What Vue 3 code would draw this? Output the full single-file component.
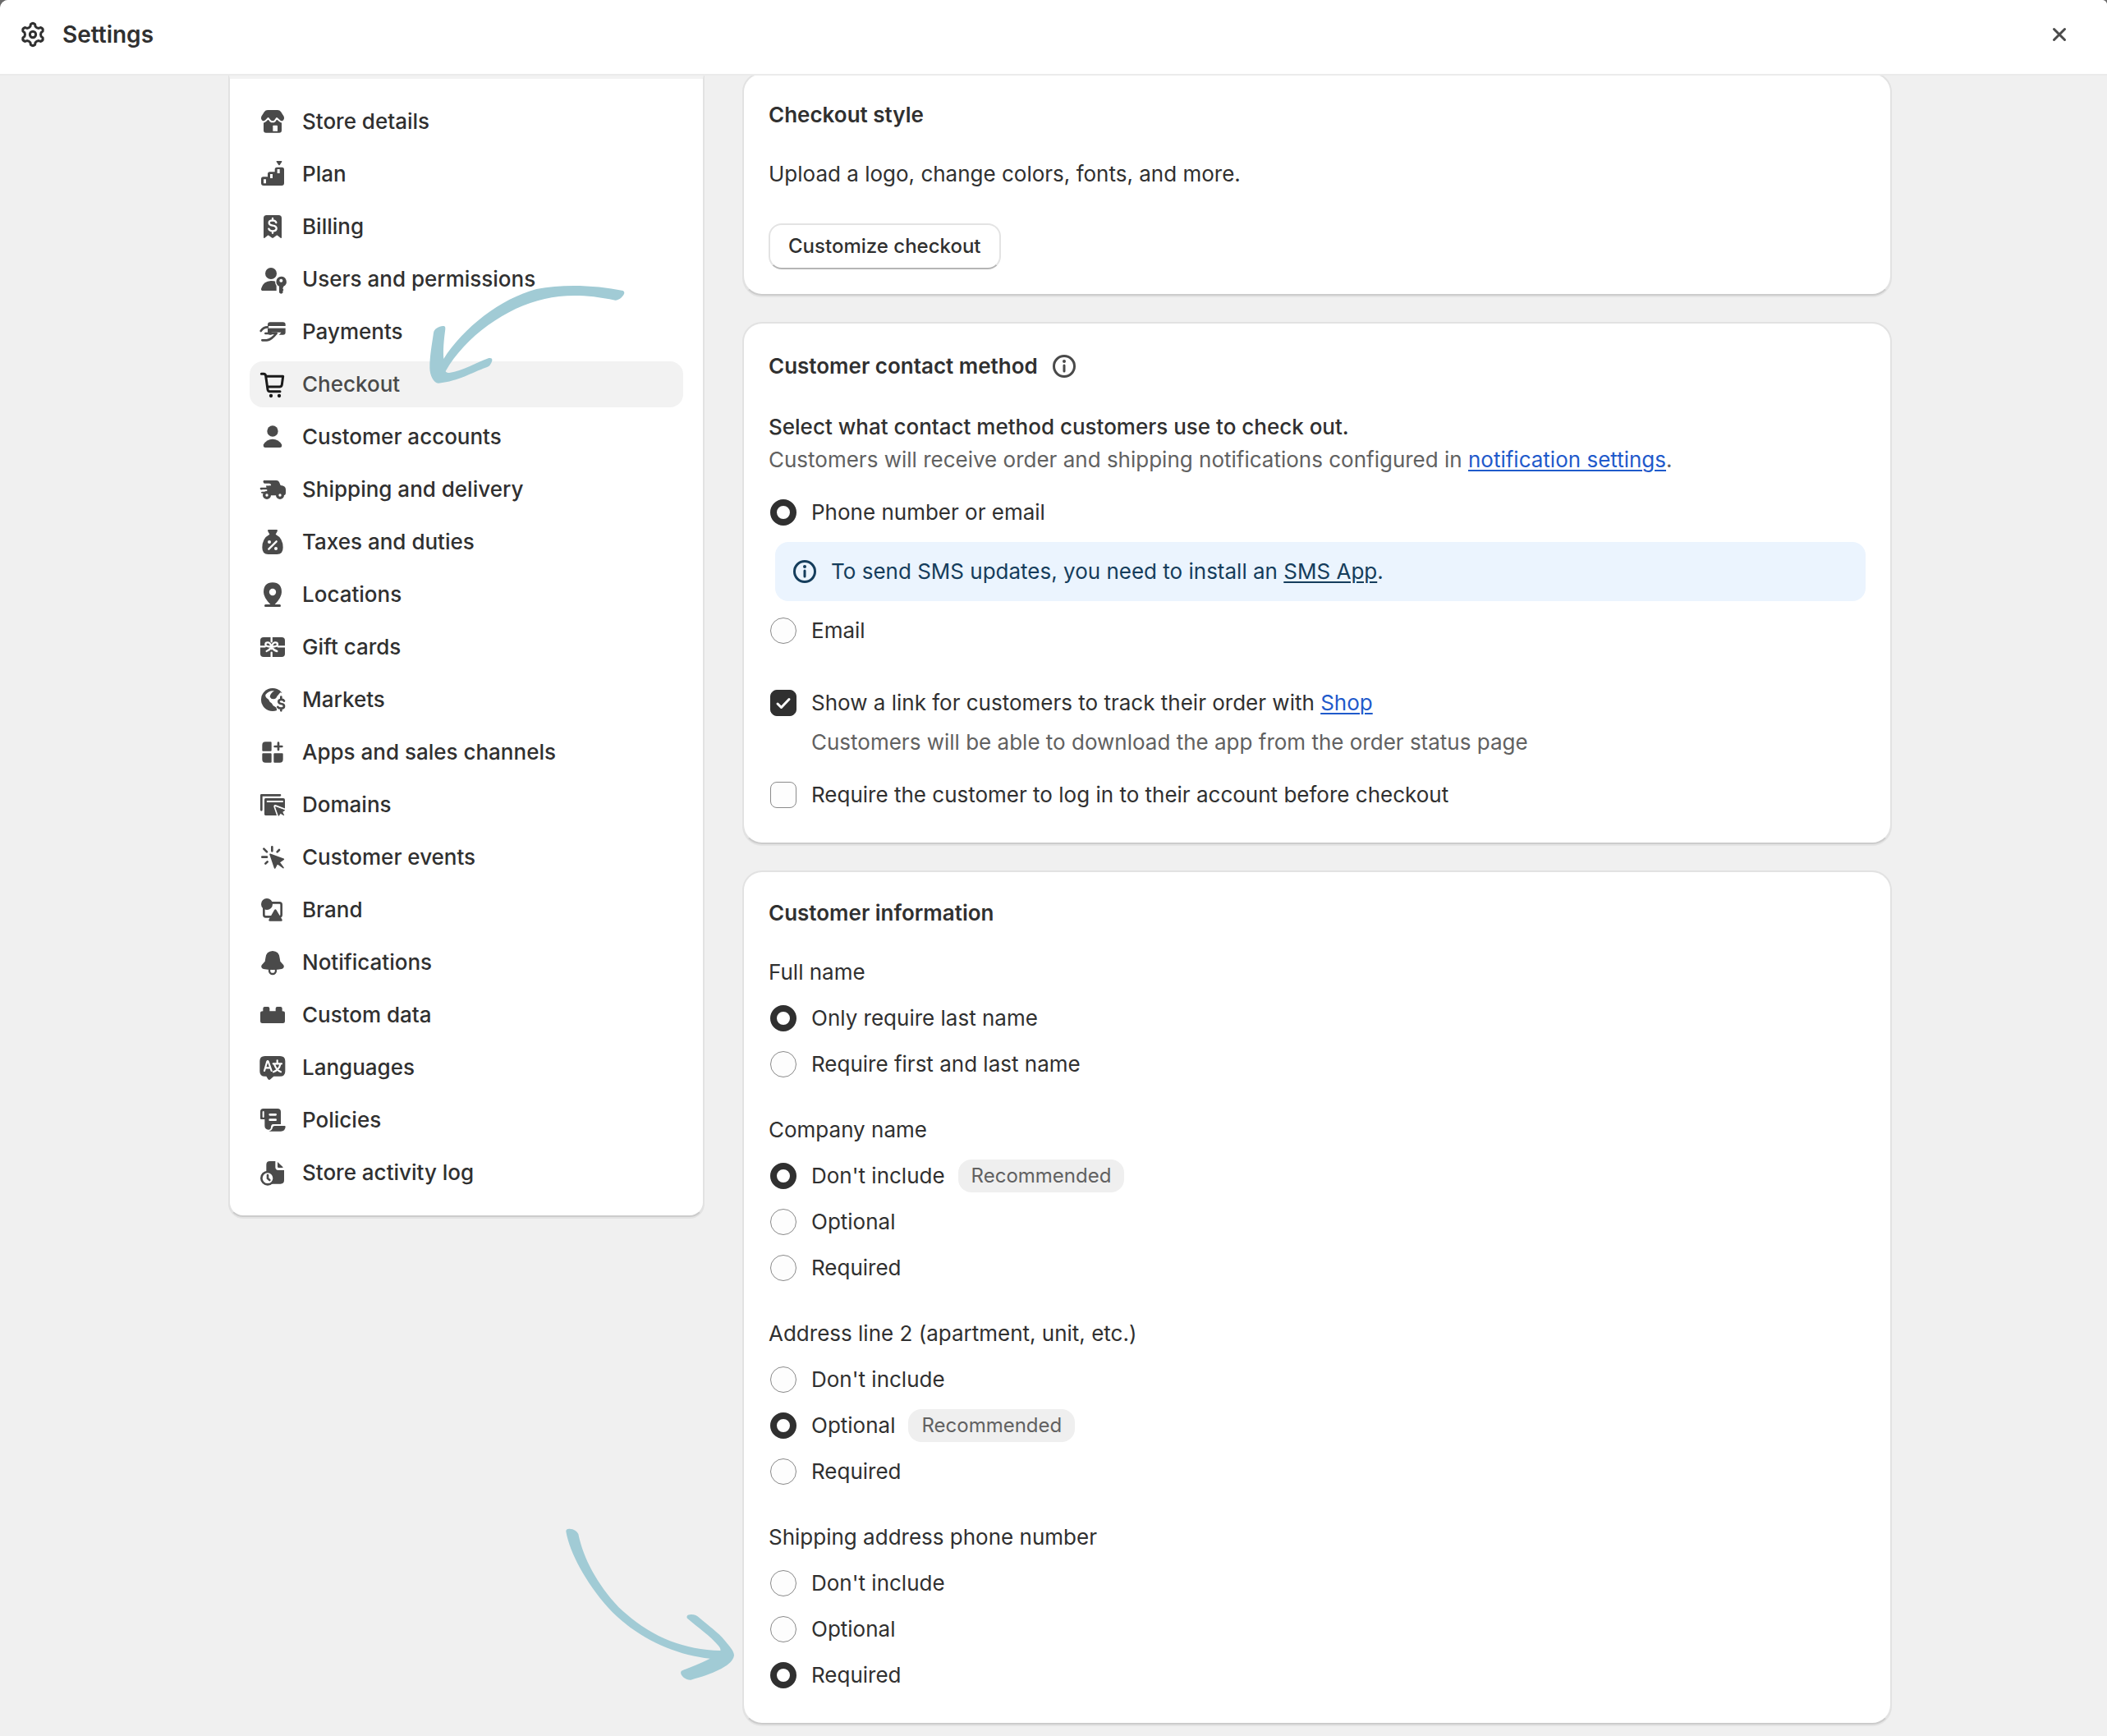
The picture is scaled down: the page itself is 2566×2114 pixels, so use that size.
<script setup>
import { ref, reactive } from 'vue'

const current = ref('Checkout')

const nav = [
  { label: 'Store details', icon: '<path d="M42 18H78Q86 18 90 24L101 41Q104 48 100 54Q97 58 93 59V92Q93 101 84 101H36Q27 101 27 92V59Q23 58 20 54Q16 48 19 41L30 24Q34 18 42 18Z"/><path d="M17 61Q27 64 34 58L44 48L52 58Q60 64 68 58L75 48L86 58Q93 64 103 61" fill="none" stroke="#fff" stroke-width="6" stroke-linejoin="round"/><path d="M61 76Q61 74 63 74H76Q78 74 78 76V95H61Z" fill="#fff"/>' },
  { label: 'Plan', icon: '<path d="M18 78Q18 70 26 70H42V60Q42 52 50 52H68V43Q68 35 76 35H94Q102 35 102 43V93Q102 102 93 102H27Q18 102 18 93ZM75 12H92Q95 12 94 15L86 27Q84 29 82 27L74 15Q73 12 75 12Z"/><path d="M27 79H36V94H27ZM51 60H60V75H51ZM77 42H86V57H77Z" fill="#fff"/>' },
  { label: 'Billing', icon: '<path d="M27 29Q27 18 38 18H82Q93 18 93 29V100Q92 104 89 101L78 92Q76 91 74 92L62 101Q60 102 58 101L46 92Q44 91 42 92L31 101Q28 104 27 100Z"/><path d="M73 45Q71 37 60 37Q47 37 47 46Q47 54 60 56Q74 58 74 67Q74 76 60 76Q49 76 46 68M60 30V38M60 76V83" fill="none" stroke="#fff" stroke-width="7" stroke-linecap="round"/>' },
  { label: 'Users and permissions', icon: '<circle cx="54" cy="39" r="21"/><path d="M54 66Q66 66 74 70V102H26Q15 102 19 92Q27 67 54 66Z"/><path d="M91 50A19 19 0 0 1 100 86L97 94L100 99L97 104L98 109Q91 117 84 109V86A19 19 0 0 1 91 50Z" stroke="#fff" stroke-width="8" /><path d="M91 50A19 19 0 0 1 100 86L97 94L100 99L97 104L98 109Q91 117 84 109V86A19 19 0 0 1 91 50Z"/><circle cx="91" cy="65" r="6" fill="#fff"/>' },
  { label: 'Payments', icon: '<path d="M42 34Q42 25 51 25H98Q107 25 107 34V62Q107 71 98 71H51Q42 71 42 62Z"/><path d="M42 43H108" stroke="#fff" stroke-width="8"/><path d="M56 69H76Q68 78 60 84" fill="none" stroke="#fff" stroke-width="14"/><path d="M17 57Q26 43 42 43M34 66H54Q58 66 64 66H74Q66 76 58 82Q46 91 38 91H22" fill="none" stroke="currentColor" stroke-width="8" stroke-linecap="round" stroke-linejoin="round"/>' },
  { label: 'Checkout', icon: '<path d="M19 22H27Q34 22 35 29L42 79Q43 86 50 86H87M36 31H98L94 61Q93 69 85 69H41" fill="none" stroke="currentColor" stroke-width="9" stroke-linecap="round" stroke-linejoin="round"/><circle cx="54" cy="102" r="6.5"/><circle cx="84" cy="102" r="6.5"/>' },
  { label: 'Customer accounts', icon: '<circle cx="60" cy="39" r="20"/><path d="M60 68Q82 68 93 88Q96 99 86 99H34Q24 99 27 88Q38 68 60 68Z"/>' },
  { label: 'Shipping and delivery', icon: '<path d="M30 27H74Q81 27 84 33L89 45Q108 47 108 60V73Q108 82 99 82H40Q30 82 30 74H22Q18 74 18 71Q18 68 22 68H42Q46 68 46 64Q46 61 42 61H18Q15 61 15 57Q15 54 18 54H44Q52 54 54 47Q56 40 48 38H30Q26 36 26 32Q26 27 30 27Z"/><path d="M18 57H42M30 31H60" stroke="currentColor" stroke-width="8" stroke-linecap="round"/><path d="M36 46H60V58L50 70H40Z"/><path d="M26 43H48M24 63H38" stroke="#fff" stroke-width="5" stroke-linecap="round"/><circle cx="39" cy="81" r="10" fill="#fff" stroke="currentColor" stroke-width="10"/><circle cx="87" cy="81" r="10" fill="#fff" stroke="currentColor" stroke-width="10"/>' },
  { label: 'Taxes and duties', icon: '<path d="M46 15H74Q80 15 77 21L71 32Q98 46 98 80Q98 105 76 105H44Q22 105 22 80Q22 46 49 32L43 21Q40 15 46 15Z"/><path d="M46 86L74 58" stroke="#fff" stroke-width="7" stroke-linecap="round"/><circle cx="48" cy="60" r="6" fill="#fff"/><circle cx="72" cy="84" r="6" fill="#fff"/>' },
  { label: 'Locations', icon: '<path d="M60 16Q93 17 93 51Q93 71 68 96H86Q90 97 90 101Q90 105 86 105H34Q30 105 30 101Q30 97 34 96H52Q27 71 27 51Q27 17 60 16Z"/><circle cx="60" cy="51" r="12.5" fill="#fff"/>' },
  { label: 'Gift cards', icon: '<rect x="15" y="24" width="90" height="72" rx="12"/><path d="M56 22V40M56 80V98M13 58H32M80 58H107M56 59Q34 58 34 50Q35 42 43 43Q52 44 56 59Q60 44 69 43Q77 42 78 50Q78 58 56 59ZM56 60Q48 72 38 75M56 60Q64 72 76 75" fill="none" stroke="#fff" stroke-width="7" stroke-linecap="round"/>' },
  { label: 'Markets', icon: '<circle cx="60" cy="60" r="42"/><path d="M34 42Q46 26 66 28Q52 36 50 50Q54 58 64 58Q72 58 76 48L88 34L110 40V110H74Q78 96 72 88L62 82Q58 72 50 68Q46 58 38 54Q32 50 34 42Z" fill="#fff"/><path d="M102 65Q99 59 91 60Q82 60 82 67Q82 74 91 75Q102 76 102 84Q102 92 91 92Q82 92 79 87M91 50V58M91 94V100" fill="none" stroke="currentColor" stroke-width="8" stroke-linecap="round"/>' },
  { label: 'Apps and sales channels', icon: '<path d="M34 22H53Q56 22 56 25V53Q56 56 53 56H25Q22 56 22 53V34Q22 22 34 22ZM25 64H53Q56 64 56 67V95Q56 98 53 98H34Q22 98 22 86V67Q22 64 25 64ZM67 64H95Q98 64 98 67V86Q98 98 86 98H67Q64 98 64 95V67Q64 64 67 64Z"/><path d="M81 26V51M68 39H94" stroke="currentColor" stroke-width="8" stroke-linecap="round"/>' },
  { label: 'Domains', icon: '<path d="M19 79V25H87" fill="none" stroke="currentColor" stroke-width="8" stroke-linecap="round" stroke-linejoin="round"/><path d="M34 36H99Q105 36 105 42V99H34Q30 99 30 94V41Q30 36 34 36Z"/><path d="M41 48H96" stroke="#fff" stroke-width="6" stroke-linecap="round"/><path d="M70 66L105 80L96 86L104 95L98 101L90 92L82 101Z" fill="currentColor" stroke="#fff" stroke-width="12" stroke-linejoin="round"/><path d="M104 76H120V106H104V80Z" fill="#fff"/><path d="M71 68L104 80L95 86L101 98L89 91L82 100Z" stroke="currentColor" stroke-width="3" stroke-linejoin="round"/>' },
  { label: 'Customer events', icon: '<path d="M51 49L100 67L84 78L99 98L77 82L68 99Z" stroke="currentColor" stroke-width="5" stroke-linejoin="round"/><path d="M58 22V37M28 29L39 40M22 59H39M34 83L41 76M77 40L84 33" fill="none" stroke="currentColor" stroke-width="8" stroke-linecap="round"/>' },
  { label: 'Brand', icon: '<rect x="28" y="34" width="64" height="51" rx="7" fill="none" stroke="currentColor" stroke-width="8"/><path d="M66 61Q70 54 74 61L95 96Q97 101 92 101H50Q44 101 46 96Z"/><circle cx="39" cy="39" r="21"/>' },
  { label: 'Notifications', icon: '<circle cx="60" cy="90" r="12" fill="none" stroke="currentColor" stroke-width="7"/><path d="M60 18Q84 19 86 44L88 56L100 70Q105 80 93 84Q78 87 60 87Q42 87 27 84Q15 80 20 70L32 56L34 44Q36 19 60 18Z"/>' },
  { label: 'Custom data', icon: '<path d="M25 36Q25 30 31 30H43Q49 30 49 36V46H71V36Q71 30 77 30H89Q95 30 95 36V46Q105 46 105 53V83Q105 90 98 90H22Q15 90 15 83V53Q15 46 25 46Z"/>' },
  { label: 'Languages', icon: '<path d="M32 18H87Q106 18 106 36V74Q106 92 87 92H64L52 103Q47 107 43 102L37 92H32Q13 92 13 74V36Q13 18 32 18Z"/><path d="M30 72L40 38Q42 34 44 38L56 72M35 61H51M77 34V44M62 46H93M88 48Q84 68 63 76M67 50Q74 70 90 76" fill="none" stroke="#fff" stroke-width="6.500" stroke-linecap="round" stroke-linejoin="round"/>' },
  { label: 'Policies', icon: '<path d="M26 18H78Q90 18 90 30V75H62Q54 76 54 86Q53 95 45 95Q31 94 31 80V57H18Q15 57 15 54V29Q15 18 26 18Z"/><path d="M68 81H104Q107 81 107 84Q106 101 90 101H46Q58 98 60 87Q61 81 68 81Z"/><path d="M50 40H71M50 59H71" stroke="#fff" stroke-width="8" stroke-linecap="round"/><path d="M26 30V48" stroke="#fff" stroke-width="6" stroke-linecap="round"/>' },
  { label: 'Store activity log', icon: '<path d="M50 18H70V40Q70 51 81 51H102V88Q102 101 89 101H37V31Q37 18 50 18Z"/><path d="M78 21L98 40Q98 42 96 42H82Q78 42 78 38Z"/><circle cx="42" cy="80" r="23" fill="#fff" stroke="currentColor" stroke-width="8"/><path d="M42 69V81L49 87" fill="none" stroke="currentColor" stroke-width="8" stroke-linecap="round"/>' }
]

// Outline of the six-toothed gear, one tooth every 60 degrees.
const gear = Array.from({ length: 6 }, (_, k) => {
  const at = (deg, r) => {
    const a = ((k * 60 - 90 + deg) * Math.PI) / 180
    return `${(60 + r * Math.cos(a)).toFixed(1)} ${(60 + r * Math.sin(a)).toFixed(1)}`
  }
  return `${k ? 'L' : 'M'}${at(-17, 31)}L${at(-12, 38)}Q${at(0, 45)} ${at(12, 38)}L${at(17, 31)}Q${at(30, 27)} ${at(43, 31)}`
}).join('') + 'Z'

const contact = ref('phone')
const showShop = ref(true)
const requireLogin = ref(false)

const groups = reactive([
  { id: 'full-name', title: 'Full name', value: 'Only require last name', options: ['Only require last name', 'Require first and last name'] },
  { id: 'company', title: 'Company name', value: "Don't include", recommended: "Don't include", options: ["Don't include", 'Optional', 'Required'] },
  { id: 'address-2', title: 'Address line 2 (apartment, unit, etc.)', value: 'Optional', recommended: 'Optional', options: ["Don't include", 'Optional', 'Required'] },
  { id: 'phone', title: 'Shipping address phone number', value: 'Required', options: ["Don't include", 'Optional', 'Required'] }
])
</script>

<template>
  <div class="settings">
    <header class="topbar">
      <svg class="icon" viewBox="0 0 120 120" aria-hidden="true">
        <path :d="gear" fill="none" stroke="currentColor" stroke-width="9" stroke-linejoin="round" />
        <circle cx="60" cy="60" r="11" fill="none" stroke="currentColor" stroke-width="9" />
      </svg>
      <h1>Settings</h1>
      <button type="button" class="close" aria-label="Close">
        <svg viewBox="0 0 40 40" aria-hidden="true">
          <path d="M13.500 13.500L26.500 26.500M26.500 13.500L13.500 26.500" stroke="currentColor" stroke-width="3" stroke-linecap="round" />
        </svg>
      </button>
    </header>

    <div class="layout">
      <aside class="sidebar">
        <nav>
          <a
            v-for="item in nav"
            :key="item.label"
            href="#"
            :class="{ active: item.label === current }"
            @click.prevent="current = item.label"
          >
            <svg class="icon" viewBox="0 0 120 120" fill="currentColor" aria-hidden="true" v-html="item.icon"></svg>
            <span>{{ item.label }}</span>
          </a>
        </nav>
        <svg class="arrow arrow-nav" viewBox="0 0 900 540" aria-hidden="true">
          <path d="M84 256C86 240 110 228 124 232Q128 234 127 242C122 280 118 320 121 351C190 240 330 130 460 96C560 76 680 82 776 102Q783 106 780 114C775 124 764 136 748 137C640 114 560 116 490 132C350 162 200 270 128 396Q130 402 142 402C190 396 240 364 286 348Q300 346 298 358Q292 378 278 382C220 402 180 432 102 440C84 440 70 410 70 384C70 340 78 300 84 256Z" />
        </svg>
      </aside>

      <main class="cards">
        <section class="card">
          <h2>Checkout style</h2>
          <p class="upload">Upload a logo, change colors, fonts, and more.</p>
          <button type="button" class="customize">Customize checkout</button>
        </section>

        <section class="card">
          <div class="heading">
            <h2>Customer contact method</h2>
            <button type="button" class="info" aria-label="About customer contact method">
              <svg class="icon" viewBox="0 0 40 40" aria-hidden="true">
                <circle cx="20" cy="20" r="12.500" fill="none" stroke="currentColor" stroke-width="3" />
                <circle cx="20" cy="14" r="2" fill="currentColor" />
                <path d="M20 19V26" stroke="currentColor" stroke-width="3" stroke-linecap="round" />
              </svg>
            </button>
          </div>
          <h3>Select what contact method customers use to check out.</h3>
          <p class="subdued">Customers will receive order and shipping notifications configured in <a href="#">notification settings</a>.</p>

          <div class="contact">
            <label class="choice"><input v-model="contact" type="radio" name="contact" value="phone" /><span>Phone number or email</span></label>
            <div class="banner">
              <svg class="icon" viewBox="0 0 40 40" aria-hidden="true">
                <circle cx="20" cy="20" r="12.500" fill="none" stroke="currentColor" stroke-width="3" />
                <circle cx="20" cy="14" r="2" fill="currentColor" />
                <path d="M20 19V26" stroke="currentColor" stroke-width="3" stroke-linecap="round" />
              </svg>
              <p>To send SMS updates, you need to install an <a href="#">SMS App</a>.</p>
            </div>
            <label class="choice"><input v-model="contact" type="radio" name="contact" value="email" /><span>Email</span></label>
          </div>

          <div class="checks">
            <div>
              <label class="choice"><input v-model="showShop" type="checkbox" aria-describedby="shop-help" /><span>Show a link for customers to track their order with <a href="#">Shop</a></span></label>
              <p id="shop-help" class="subdued help">Customers will be able to download the app from the order status page</p>
            </div>
            <label class="choice"><input v-model="requireLogin" type="checkbox" /><span>Require the customer to log in to their account before checkout</span></label>
          </div>
        </section>

        <section class="card">
          <h2>Customer information</h2>
          <fieldset v-for="group in groups" :key="group.id">
            <legend>{{ group.title }}</legend>
            <label v-for="option in group.options" :key="option" class="choice">
              <input v-model="group.value" type="radio" :name="group.id" :value="option" />
              <span>{{ option }}</span>
              <span v-if="group.recommended === option" class="badge">Recommended</span>
            </label>
          </fieldset>
        </section>

        <svg class="arrow arrow-phone" viewBox="0 0 640 580" aria-hidden="true">
          <path d="M7 33Q6 24 18 23C34 22 48 32 52 42C70 130 120 225 200 310C310 415 430 466 572 469Q574 462 566 452C535 415 490 385 450 350Q446 338 460 337C474 335 486 340 494 348C530 380 562 400 590 434C606 454 622 470 622 487C618 512 590 526 574 536C534 556 500 566 464 576C448 578 426 562 427 548Q427 542 436 540C470 526 500 516 534 498C400 484 260 420 160 310C80 220 20 110 7 33Z" />
        </svg>
      </main>
    </div>
  </div>
</template>

<style>
body {
  margin: 0;
  background: #6b6b6b;
}
</style>

<style scoped>
* {
  box-sizing: border-box;
}

.settings {
  min-height: 100vh;
  border-radius: 10px 6px 0 0;
  background: #f0f0f0;
  color: #303030;
  font-family: Inter, "Liberation Sans", sans-serif;
  font-size: 26px;
  font-weight: 400;
  line-height: 40px;
}

h1,
h2,
h3,
p {
  margin: 0;
  font-size: inherit;
}

button {
  border: 0;
  background: none;
  padding: 0;
  color: inherit;
  font: inherit;
  cursor: pointer;
}

.icon {
  display: block;
  flex: none;
  width: 40px;
  height: 40px;
}

.topbar {
  position: sticky;
  top: 0;
  z-index: 2;
  display: flex;
  align-items: center;
  gap: 16px;
  height: 92px;
  padding: 0 38px 6px 20px;
  border-bottom: 2px solid #ebebeb;
  border-radius: 10px 6px 0 0;
  background: #fff;
}

.topbar h1 {
  font-size: 28px;
  font-weight: 600;
}

.close {
  width: 40px;
  height: 40px;
  margin-left: auto;
  color: #4a4a4a;
}

.close svg {
  display: block;
}

.layout {
  display: grid;
  grid-template-columns: 580px minmax(0, 1fr);
  align-items: start;
  gap: 46px;
  max-width: 2042px;
  margin: -4px auto 0;
  padding: 0 0 14px 16px;
}

.sidebar,
.card {
  border: 2px solid #e2e2e2;
  border-bottom-color: #cccccc;
  background: #fff;
  box-shadow: 0 2px 0 #e3e3e3;
}

.sidebar {
  position: relative;
  border-top: 8px solid #f2f2f2;
  border-radius: 0 0 18px 18px;
}

nav {
  display: flex;
  flex-direction: column;
  gap: 8px;
  padding: 24px;
}

nav a {
  display: flex;
  align-items: center;
  gap: 16px;
  height: 56px;
  padding: 0 8px;
  border-radius: 16px;
  color: #303030;
  font-weight: 500;
  text-decoration: none;
}

nav .icon {
  color: #4a4a4a;
}

nav .active {
  background: #f2f2f2;
  color: #4a4a4a;
}

nav .active .icon {
  color: #1a1a1a;
}

.arrow {
  position: absolute;
  fill: #a1cbd5;
  pointer-events: none;
}

.arrow-nav {
  top: 224px;
  left: 220px;
  width: 300px;
  height: 180px;
}

.arrow-phone {
  bottom: 53px;
  left: -217px;
  width: 213px;
  height: 193px;
}

.cards {
  position: relative;
  display: flex;
  flex-direction: column;
  gap: 32px;
}

.card {
  padding: 30px;
  border-radius: 24px;
}

h2 {
  font-weight: 600;
}

h3 {
  font-weight: 500;
}

.upload {
  margin: 32px 0 40px;
}

.customize {
  display: block;
  height: 56px;
  padding: 0 22px;
  border: 2px solid #e3e3e3;
  border-bottom-color: #b5b5b5;
  border-radius: 16px;
  background: #fff;
  font-size: 24px;
  font-weight: 500;
  line-height: 32px;
}

.heading {
  display: flex;
  align-items: center;
  gap: 12px;
  height: 44px;
  margin-bottom: 32px;
}

.info {
  color: #4a4a4a;
}

.subdued {
  color: #616161;
}

.card a {
  color: #1f5acb;
  text-decoration: underline;
  text-decoration-thickness: 2px;
  text-underline-offset: 3px;
}

.contact {
  margin-top: 16px;
}

.choice {
  display: flex;
  align-items: center;
  gap: 16px;
  min-height: 56px;
}

.choice input {
  appearance: none;
  flex: none;
  width: 32px;
  height: 32px;
  margin: 0 2px;
  border: 1px solid #8a8a8a;
  background: #fdfdfd;
}

.choice input[type="radio"] {
  border-radius: 50%;
}

.choice input[type="radio"]:checked {
  border: 8px solid #303030;
  background: #fff;
}

.choice input[type="checkbox"] {
  border-radius: 8px;
}

.choice input[type="checkbox"]:checked {
  border-color: #303030;
  background: #303030 url("data:image/svg+xml,%3Csvg xmlns='http://www.w3.org/2000/svg' viewBox='0 0 30 30' fill='none' stroke='white' stroke-width='3' stroke-linecap='round' stroke-linejoin='round'%3E%3Cpath d='M8 16L12.500 20.500L22 10.500'/%3E%3C/svg%3E") center / 30px;
}

.banner {
  display: flex;
  align-items: center;
  gap: 12px;
  margin: 8px 0 8px 8px;
  padding: 16px;
  border-radius: 16px;
  background: #ebf4fe;
  color: #153d5c;
}

.card .banner a {
  color: inherit;
}

.checks {
  display: flex;
  flex-direction: column;
  gap: 16px;
  margin-top: 32px;
}

.help {
  padding-left: 52px;
}

fieldset {
  min-width: 0;
  margin: 32px 0 0;
  padding: 0;
  border: 0;
}

legend {
  margin-bottom: 8px;
  padding: 0;
}

.badge {
  padding: 0 16px;
  border-radius: 16px;
  background: #efefef;
  color: #616161;
  font-size: 24px;
}
</style>
